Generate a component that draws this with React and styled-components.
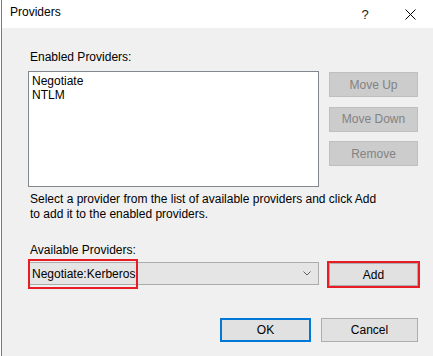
import React from 'react'
import styled, { createGlobalStyle } from 'styled-components'

/******************************************************************************/
// Data
/******************************************************************************/

const ENABLED = ['Negotiate', 'NTLM']

const SIDE_ACTIONS = ['Move Up', 'Move Down', 'Remove']

/******************************************************************************/
// Styled
/******************************************************************************/

const GlobalStyle = createGlobalStyle`
  html, body {
    margin: 0;
    padding: 0;
    background: #ffffff;
  }
  body {
    font-family: 'Liberation Sans', Arial, sans-serif;
    font-size: 12px;
    color: #000000;
  }
`

const Window = styled.div`
  box-sizing: border-box;
  width: 432px;
  height: 356px;
  margin-left: 1px;
  border-left: 1px solid #7a7a7a;
  background: #f0f0f0;

  display: flex;
  flex-direction: column;
  overflow: hidden;
`

const TitleBar = styled.div`
  height: 28px;
  flex-shrink: 0;
  background: #ffffff;
  display: flex;
  align-items: stretch;
`

const Title = styled.div`
  flex: 1;
  padding: 5px 0 0 8px;
  line-height: 15px;
`

const CaptionButton = styled.div`
  width: ${p => p.$w}px;
  display: flex;
  align-items: center;
  justify-content: center;
  font-size: 13px;
  color: #1a1a1a;
`

const Body = styled.div`
  flex: 1;
  padding: 22px 15px 0 26px;
  display: flex;
  flex-direction: column;
`

const Label = styled.div`
  line-height: 15px;
  padding-left: 2px;
  margin-top: ${p => p.$top || 0}px;
`

const ListRow = styled.div`
  display: flex;
  gap: 10px;
  margin-top: 6px;
`

const ListBox = styled.div`
  box-sizing: border-box;
  width: 291px;
  height: 116px;
  padding: 2px 3px;
  background: #ffffff;
  border: 1px solid #828790;
  line-height: 14px;
`

const SideButtons = styled.div`
  display: flex;
  flex-direction: column;
  gap: 9.5px;
  padding-top: 1px;
`

const Button = styled.button`
  box-sizing: border-box;
  width: ${p => p.$w || 89}px;
  height: ${p => p.$h || 25}px;
  padding: 0;
  margin: 0;
  font: inherit;
  color: #000000;
  background: #e1e1e1;
  border: 1px solid #adadad;

  &:disabled {
    background: #cccccc;
    border-color: #bfbfbf;
    color: #838383;
  }
`

const DefaultButton = styled(Button)`
  border: 2px solid #0078d7;
`

const MarkedButton = styled(Button)`
  margin-top: 1px;
  outline: 2px solid #e81c24;
  outline-offset: 0;
`

const Description = styled.div`
  margin-top: 5px;
  padding-left: 2px;
  line-height: 15px;
`

const ComboRow = styled.div`
  display: flex;
  align-items: flex-start;
  gap: 10px;
  margin-top: 4px;
`

const Combo = styled.div`
  position: relative;
  box-sizing: border-box;
  width: 291px;
  height: 23px;
  padding: 0 7px 0 3px;
  background: #e5e5e5;
  border: 1px solid #acacac;

  display: flex;
  align-items: center;
  justify-content: space-between;
`

const Highlight = styled.span`
  position: absolute;
  left: -1px;
  top: -4px;
  width: 110px;
  height: 30px;
  box-sizing: border-box;
  border: 2px solid #e81c24;
`

const Footer = styled.div`
  display: flex;
  justify-content: flex-end;
  gap: 10px;
  margin-top: 32px;
`

/******************************************************************************/
// Icons
/******************************************************************************/

const CloseIcon = () =>
  <svg width='11' height='11' viewBox='0 0 11 11'>
    <path d='M0.5 0.5 L10.5 10.5 M10.5 0.5 L0.5 10.5' stroke='#000' strokeWidth='1' fill='none'/>
  </svg>

const Chevron = () =>
  <svg width='8' height='5' viewBox='0 0 8 5'>
    <path d='M0.5 0.5 L4 4 L7.5 0.5' stroke='#606060' strokeWidth='1' fill='none'/>
  </svg>

/******************************************************************************/
// Main Component
/******************************************************************************/

const App = () =>
  <>
    <GlobalStyle/>
    <Window>
      <TitleBar>
        <Title>Providers</Title>
        <CaptionButton $w={46}>?</CaptionButton>
        <CaptionButton $w={45}><CloseIcon/></CaptionButton>
      </TitleBar>
      <Body>
        <Label>Enabled Providers:</Label>
        <ListRow>
          <ListBox>
            {ENABLED.map(name => <div key={name}>{name}</div>)}
          </ListBox>
          <SideButtons>
            {SIDE_ACTIONS.map(action => <Button key={action} disabled>{action}</Button>)}
          </SideButtons>
        </ListRow>
        <Description>
          Select a provider from the list of available providers and click Add<br/>
          to add it to the enabled providers.
        </Description>
        <Label $top={21}>Available Providers:</Label>
        <ComboRow>
          <Combo>
            <span>Negotiate:Kerberos</span>
            <Chevron/>
            <Highlight/>
          </Combo>
          <MarkedButton $h={23}>Add</MarkedButton>
        </ComboRow>
        <Footer>
          <DefaultButton $w={91} $h={24}>OK</DefaultButton>
          <Button $w={97} $h={24}>Cancel</Button>
        </Footer>
      </Body>
    </Window>
  </>

/******************************************************************************/
// Exports
/******************************************************************************/

export default App
